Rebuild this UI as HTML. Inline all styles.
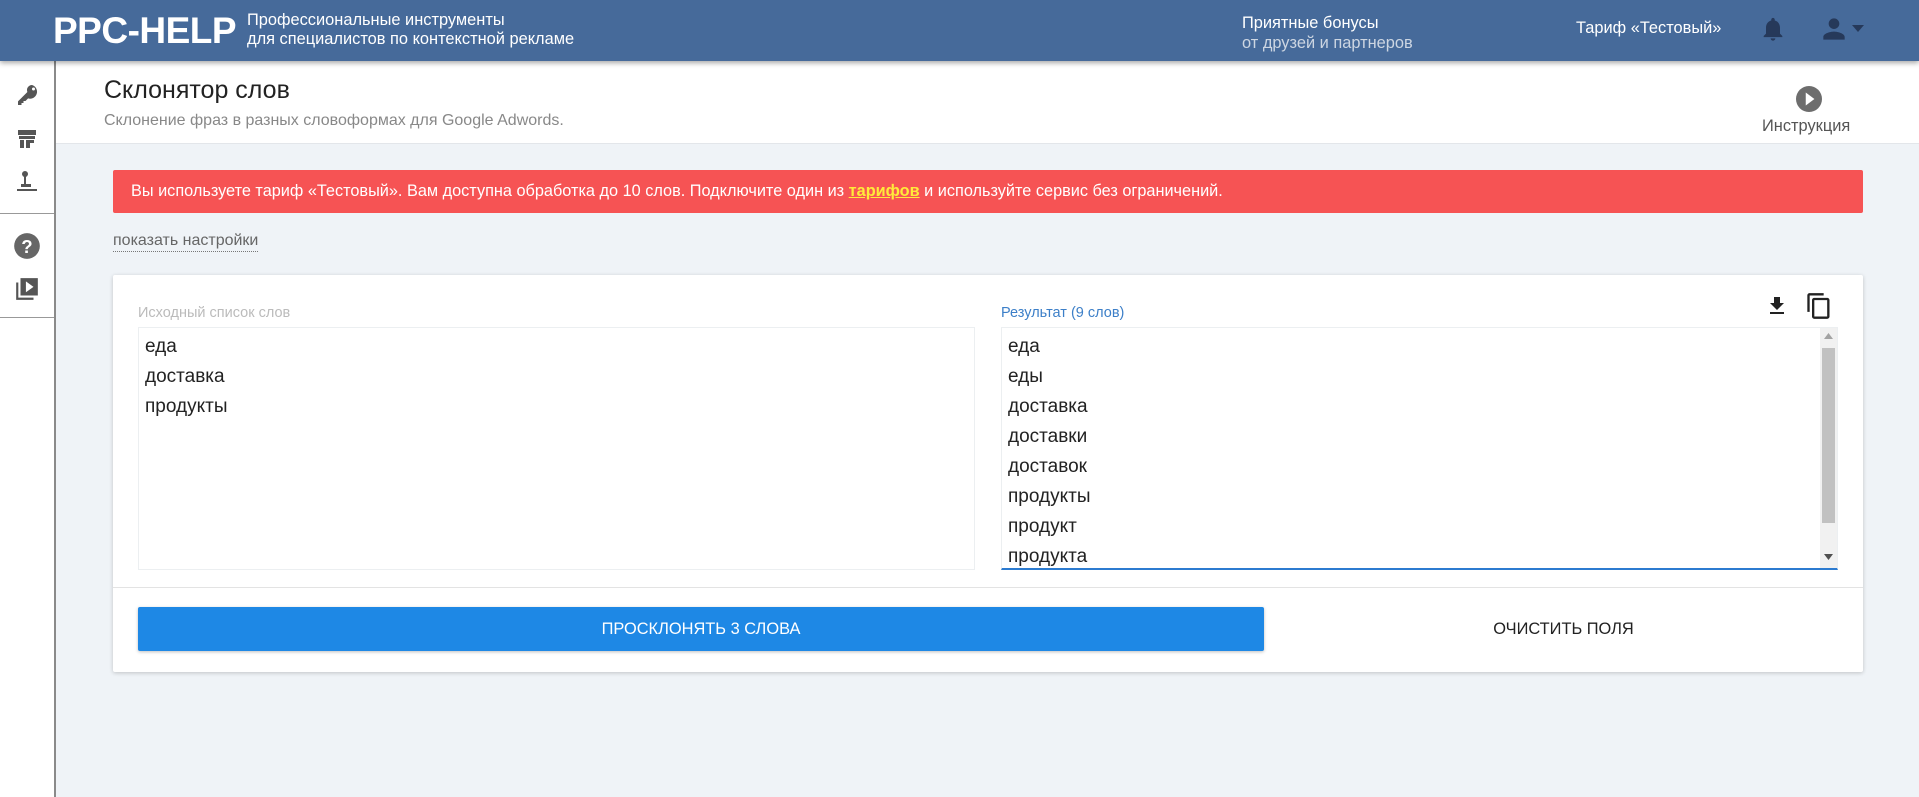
<!DOCTYPE html>
<html><head><meta charset="utf-8"><style>
*{box-sizing:border-box;margin:0;padding:0}
body{width:1919px;height:797px;overflow:hidden;background:#eff3f7;font-family:"Liberation Sans",sans-serif;position:relative;color:#333}
.hdr{position:absolute;left:0;top:0;width:1919px;height:61px;background:#466a9a;box-shadow:0 2px 5px rgba(0,0,0,.35);z-index:3;color:#fff}
.abs{position:absolute}
.side{position:absolute;left:0;top:61px;width:56px;height:736px;background:#fff;border-right:2px solid #8a8a8a;z-index:2}
.sep{position:absolute;left:0;width:54px;height:1px;background:#999}
.top{position:absolute;left:56px;top:61px;width:1863px;height:83px;background:#fff;border-bottom:1px solid #e3e6ea}
.card{position:absolute;left:113px;top:275px;width:1750px;height:397px;background:#fff;box-shadow:0 1px 4px rgba(0,0,0,.2);border-radius:2px}
.ta{position:absolute;top:52px;height:243px;border:1px solid #eceff1;font-size:19px;line-height:30px;padding:4px 6px;color:#222}
</style></head><body>
<div class="hdr">
  <div class="abs" style="left:53px;top:10px;font-size:37px;font-weight:bold;letter-spacing:-0.5px">PPC-HELP</div>
  <div class="abs" style="left:247px;top:11px;font-size:16.4px;line-height:19px">Профессиональные инструменты<br>для специалистов по контекстной рекламе</div>
  <div class="abs" style="left:1242px;top:13px;font-size:16.4px;line-height:20px">Приятные бонусы<br><span style="color:#cdd6e2">от друзей и партнеров</span></div>
  <div class="abs" style="left:1576px;top:19px;font-size:16.4px">Тариф «Тестовый»</div>
  <svg class="abs" style="left:1759px;top:14px" width="28" height="30" viewBox="0 0 24 24"><path fill="#26395a" d="M12 22c1.1 0 2-.9 2-2h-4c0 1.1.9 2 2 2zm6-6v-5c0-3.1-1.6-5.6-4.5-6.3V4c0-.8-.7-1.5-1.5-1.5s-1.5.7-1.5 1.5v.7C7.6 5.4 6 7.9 6 11v5l-2 2v1h16v-1l-2-2z"/></svg>
  <svg class="abs" style="left:1818px;top:13px" width="32" height="32" viewBox="0 0 24 24"><path fill="#26395a" d="M12 12c2.2 0 4-1.8 4-4s-1.8-4-4-4-4 1.8-4 4 1.8 4 4 4zm0 2c-2.7 0-8 1.3-8 4v2h16v-2c0-2.7-5.3-4-8-4z"/></svg>
  <svg class="abs" style="left:1852px;top:25px" width="12" height="8"><path d="M0 0h12L6 7z" fill="#26395a"/></svg>
</div>
<div class="side">
  <svg class="abs" style="left:15px;top:22px" width="24" height="24" viewBox="0 0 24 24"><path fill="#555" d="M17 2a5 5 0 0 0-4.6 7L3 18.4V22h3.5v-2h2v-2h2l2.6-2.6A5 5 0 1 0 17 2zm1.5 5.5a1.5 1.5 0 1 1 0-3 1.5 1.5 0 0 1 0 3z"/></svg>
  <svg class="abs" style="left:15px;top:66px" width="24" height="24" viewBox="0 0 24 24"><path fill="#555" d="M3 3h18v5H3zM4 9h16v3H4zM5 13h4v8H5zM11 13h8v3h-4v5h-4z"/></svg>
  <svg class="abs" style="left:15px;top:108px" width="24" height="24" viewBox="0 0 24 24"><circle cx="10" cy="5" r="3" fill="#555"/><path fill="#555" d="M9 7h2v9h-2zM6 15h10v3H6zM2 20h20v2H2z"/></svg>
  <div class="sep" style="top:152px"></div>
  <svg class="abs" style="left:13px;top:171px" width="28" height="28" viewBox="0 0 24 24"><circle cx="12" cy="12" r="11" fill="#666"/><text x="12" y="18" text-anchor="middle" font-size="16" font-weight="bold" fill="#fff" font-family="Liberation Sans">?</text></svg>
  <svg class="abs" style="left:14px;top:214px" width="26" height="28" viewBox="0 0 24 24"><path fill="#555" d="M2 6h2v14h14v2H2zM6 2h16v16H6zm5 3v10l7-5z"/></svg>
  <div class="sep" style="top:256px"></div>
</div>
<div class="top">
  <div class="abs" style="left:48px;top:15px;font-size:25px;color:#222">Склонятор слов</div>
  <div class="abs" style="left:48px;top:51px;font-size:16px;color:#888">Склонение фраз в разных словоформах для Google Adwords.</div>
  <svg class="abs" style="left:1740px;top:25px" width="26" height="26" viewBox="0 0 24 24"><circle cx="12" cy="12" r="12" fill="#6d6d6d"/><path d="M9 6v12l8-6z" fill="#fff"/></svg>
  <div class="abs" style="left:1706px;top:56px;font-size:16.4px;color:#555">Инструкция</div>
</div>
<div class="abs" style="left:113px;top:170px;width:1750px;height:43px;background:#f65354;border-radius:2px;color:#fff;font-size:16.3px;line-height:43px;padding-left:18px">Вы используете тариф «Тестовый». Вам доступна обработка до 10 слов. Подключите один из <span style="color:#ffea3a;text-decoration:underline;font-weight:bold">тарифов</span> и используйте сервис без ограничений.</div>
<div class="abs" style="left:113px;top:231px;font-size:16px;color:#666;border-bottom:1px dotted #777;line-height:20px">показать настройки</div>
<div class="card">
  <div class="abs" style="left:25px;top:30px;font-size:14.5px;color:#bbb">Исходный список слов</div>
  <div class="ta" style="left:25px;width:837px">еда<br>доставка<br>продукты</div>
  <div class="abs" style="left:888px;top:30px;font-size:14.5px;color:#3c7fc8">Результат (9 слов)</div>
  <svg class="abs" style="left:1652px;top:18px" width="24" height="26" viewBox="0 0 24 24"><path fill="#222" d="M19 9h-4V3H9v6H5l7 7zM5 18v2h14v-2z"/></svg>
  <svg class="abs" style="left:1692px;top:16px" width="28" height="30" viewBox="0 0 24 24"><path fill="#222" d="M16 1H4c-1.1 0-2 .9-2 2v14h2V3h12zm3 4H8c-1.1 0-2 .9-2 2v14c0 1.1.9 2 2 2h11c1.1 0 2-.9 2-2V7c0-1.1-.9-2-2-2zm0 16H8V7h11z"/></svg>
  <div class="ta" style="left:888px;width:837px;border-bottom:2px solid #2c7bd0;overflow:hidden">еда<br>еды<br>доставка<br>доставки<br>доставок<br>продукты<br>продукт<br>продукта
    <div class="abs" style="right:0;top:0;width:17px;height:240px;background:#f1f1f1"><div class="abs" style="left:2px;top:20px;width:13px;height:175px;background:#c1c1c1"></div>
    <svg class="abs" style="left:4px;top:5px" width="9" height="6"><path d="M0 6h9L4.5 0z" fill="#a3a3a3"/></svg>
    <svg class="abs" style="left:4px;top:226px" width="9" height="6"><path d="M0 0h9L4.5 6z" fill="#505050"/></svg></div>
  </div>
  <div class="abs" style="left:0;top:312px;width:1750px;height:1px;background:#e3e3e3"></div>
  <div class="abs" style="left:25px;top:332px;width:1126px;height:44px;background:#1e88e5;border-radius:2px;box-shadow:0 1px 3px rgba(0,0,0,.25);color:#fff;font-size:16.4px;line-height:44px;text-align:center;font-weight:500">ПРОСКЛОНЯТЬ 3 СЛОВА</div>
  <div class="abs" style="left:1151px;top:332px;width:599px;height:44px;color:#222;font-size:16.4px;line-height:44px;text-align:center">ОЧИСТИТЬ ПОЛЯ</div>
</div>
</body></html>
